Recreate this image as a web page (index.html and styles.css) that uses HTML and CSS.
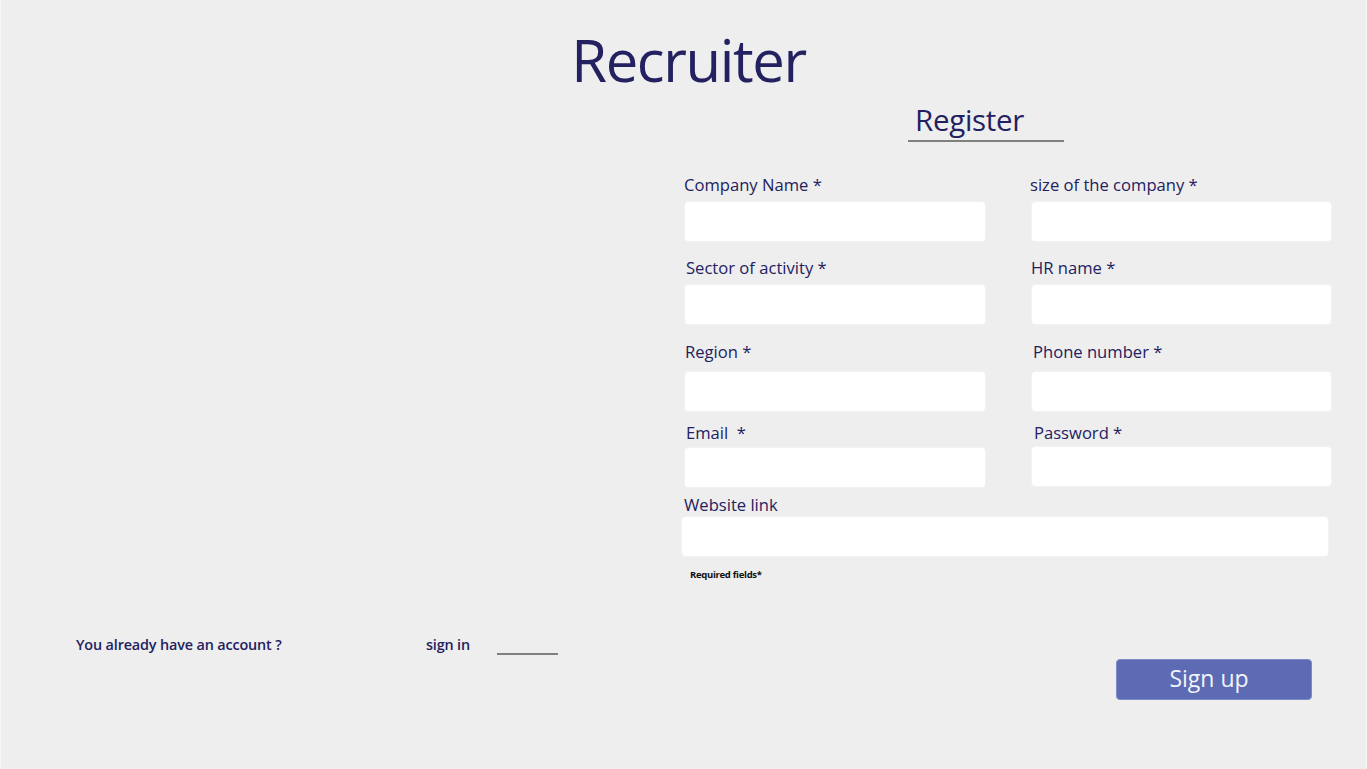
FILE: index.html
```html
<!DOCTYPE html>
<html lang="en">
<head>
<meta charset="utf-8">
<title>Recruiter - Register</title>
<link rel="stylesheet" href="styles.css">
</head>
<body>
<div class="page">
  <h1 class="title">Recruiter</h1>
  <section class="panel">
    <h2 class="register">Register</h2>
    <form class="form">
      <div class="field f1">
        <label class="label">Company Name *</label>
        <input class="input" type="text">
      </div>
      <div class="field f1 right">
        <label class="label">size of the company *</label>
        <input class="input" type="text">
      </div>
      <div class="field f2">
        <label class="label">Sector of activity *</label>
        <input class="input" type="text">
      </div>
      <div class="field f2 right">
        <label class="label">HR name *</label>
        <input class="input" type="text">
      </div>
      <div class="field f3">
        <label class="label">Region *</label>
        <input class="input" type="text">
      </div>
      <div class="field f3 right">
        <label class="label">Phone number *</label>
        <input class="input" type="text">
      </div>
      <div class="field f4">
        <label class="label">Email &nbsp;*</label>
        <input class="input" type="email">
      </div>
      <div class="field f4 right">
        <label class="label">Password *</label>
        <input class="input" type="password">
      </div>
      <div class="field wide">
        <label class="label">Website link</label>
        <input class="input" type="url">
      </div>
    </form>
    <p class="required">Required fields*</p>
  </section>
  <footer class="footer">
    <div class="account">
      <span class="q">You already have an account ?</span>
      <a class="signin" href="#">sign in</a>
      <span class="sline"></span>
    </div>
    <button class="signup" type="button">Sign up</button>
  </footer>
</div>
</body>
</html>
```
FILE: styles.css
```css
* { box-sizing: border-box; }
html, body { margin: 0; padding: 0; }
body {
  background: #eeeeee;
  font-family: "Open Sans", "Liberation Sans", sans-serif;
  color: #23215f;
  width: 1367px;
  height: 769px;
  overflow: hidden;
}
.page {
  height: 769px;
  display: flex;
  flex-direction: column;
  border-left: 1px solid #f6f6f6;
  border-right: 1px solid #f6f6f6;
}
.title {
  margin: 22px 0 0 0;
  text-align: center;
  font-size: 58px;
  font-weight: 400;
  line-height: 76px;
  height: 76px;
  padding-left: 10px;
  letter-spacing: -1.4px;
}
.panel {
  margin-left: 680px;
  width: 654px;
  display: flex;
  flex-direction: column;
}
.register {
  margin: 2px 0 0 227px;
  width: 156px;
  font-size: 29.5px;
  font-weight: 400;
  line-height: 40px;
  padding-left: 7px;
  border-bottom: 2px solid #808080;
  height: 42px;
  letter-spacing: -0.3px;
}
.form {
  margin-top: 33px;
  display: grid;
  grid-template-columns: 302px 301px;
  column-gap: 45px;
  padding-left: 3px;
}
.field { display: flex; flex-direction: column; }
.label {
  font-size: 16.6px;
  line-height: 20px;
  height: 20px;
  margin-bottom: 6px;
  letter-spacing: 0;
}
.input {
  height: 41px;
  border: 1px solid #f2f2f2;
  background: #ffffff;
  border-radius: 4px;
  font: inherit;
  padding: 0 10px;
  outline: none;
}
.f2 { margin-top: 16px; }
.f2 .label { padding-left: 2px; }
.f3 { margin-top: 17px; }
.f3 .label { margin-bottom: 9px; padding-left: 1px; }
.f4 { margin-top: 11px; }
.f4 .label { margin-bottom: 4px; padding-left: 2px; }
.f4.right .label { margin-bottom: 3px; }
.f4.right .input { margin-bottom: 1px; }
.right .label { padding-left: 0; }
.f1.right .label { margin-left: -1px; }
.f3.right .label { padding-left: 2px; }
.f4.right .label { padding-left: 3px; }
.wide {
  grid-column: 1 / 3;
  margin-top: 7px;
  margin-left: -3px;
  margin-right: 3px;
}
.wide .label { margin-bottom: 1px; padding-left: 3px; }
.required {
  margin: 11px 0 0 9px;
  font-size: 9.5px;
  font-weight: 700;
  color: #111;
  letter-spacing: -0.3px;
}
.footer {
  margin-top: 52px;
  display: flex;
  justify-content: space-between;
  align-items: flex-start;
  padding: 0 54px 0 75px;
}
.account {
  display: flex;
  align-items: center;
  height: 22px;
  font-size: 14.4px;
  font-weight: 600;
  letter-spacing: -0.15px;
}
.q { width: 350px; }
.signin { color: #23215f; text-decoration: none; }
.sline {
  width: 61px;
  height: 2px;
  background: #808080;
  margin-left: 27px;
  margin-top: 20px;
}
.signup {
  margin-top: 26px;
  width: 196px;
  height: 41px;
  background: #5c6bb3;
  border: 1px solid #7d8ac6;
  border-radius: 4px;
  color: #f2f3fa;
  font-family: inherit;
  font-size: 23px;
  line-height: 36px;
  padding: 0 10px 4px 0;
}
```
